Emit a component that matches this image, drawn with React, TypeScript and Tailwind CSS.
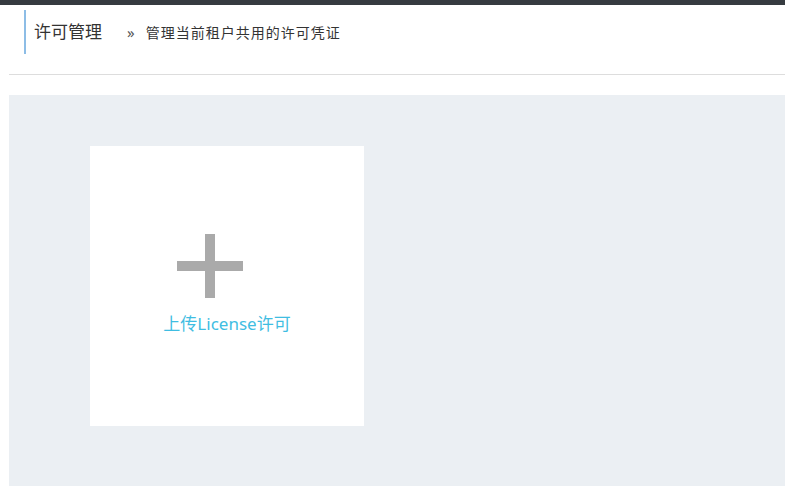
import React from "react";

export default function App() {
  return (
    <div className="w-[785px] h-[486px] overflow-hidden bg-white" style={{ fontFamily: '"Noto Sans", "Noto Sans CJK SC", sans-serif' }}>
      <div className="h-[5px] bg-[#363b40]" />
      <div className="pl-[9px]">
        <div className="h-[69px] pt-[5px]">
          <div className="ml-[15px] h-[44px] border-l-2 border-[#8dbde6] pl-[8px] flex items-center">
            <span className="text-[17px] leading-none text-[#333] mt-[-1px]">许可管理</span>
            <span className="ml-[25px] text-[15px] leading-none text-[#555] mt-[1px]">»</span>
            <span className="ml-[11px] text-[14px] leading-none tracking-[1px] text-[#333] mt-[2px]">管理当前租户共用的许可凭证</span>
          </div>
        </div>
        <div className="h-px bg-[#dddddd]" />
        <div className="mt-[20px] h-[391px] bg-[#ebeff3] pl-[81px] pt-[51px]">
          <div className="w-[274px] h-[280px] bg-white flex flex-col items-center pt-[88px]">
            <svg width="66" height="64" viewBox="0 0 66 64" className="mr-[34px]">
              <rect x="28" y="0" width="10" height="64" fill="#aaaaaa" />
              <rect x="0" y="27" width="66" height="10" fill="#aaaaaa" />
            </svg>
            <div className="mt-[17px] text-[17px] leading-none text-[#3fbde2]">上传License许可</div>
          </div>
        </div>
      </div>
    </div>
  );
}
